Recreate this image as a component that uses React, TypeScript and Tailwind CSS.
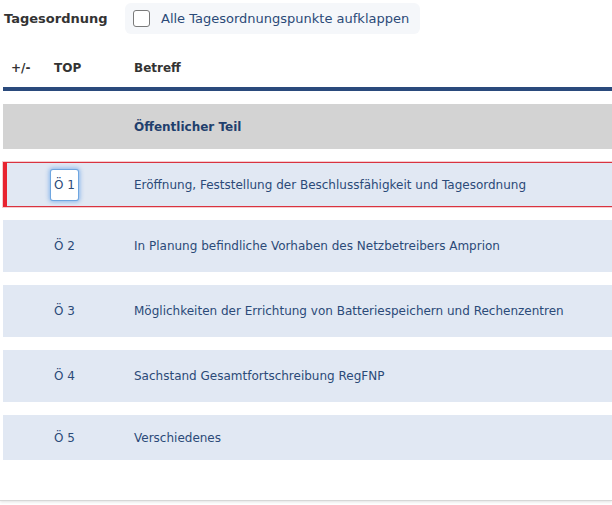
import React from "react";

const rows = [
  { top: "Ö 1", text: "Eröffnung, Feststellung der Beschlussfähigkeit und Tagesordnung", h: "h-[45px]", active: true },
  { top: "Ö 2", text: "In Planung befindliche Vorhaben des Netzbetreibers Amprion", h: "h-[52px]" },
  { top: "Ö 3", text: "Möglichkeiten der Errichtung von Batteriespeichern und Rechenzentren", h: "h-[52px]" },
  { top: "Ö 4", text: "Sachstand Gesamtfortschreibung RegFNP", h: "h-[52px]" },
  { top: "Ö 5", text: "Verschiedenes", h: "h-[45px]" },
];

export default function App() {
  return (
    <div className="w-[612px] h-[505px] overflow-hidden bg-white font-['DejaVu_Sans',sans-serif]">
      <div className="h-[501px] border-b border-[#d6d6d6] shadow-[0_1px_3px_rgba(0,0,0,0.12)]">
        <div className="flex items-center h-[36px] pl-[4px] pt-[1px]">
          <span className="text-[13px] font-bold text-[#333] w-[121px]">Tagesordnung</span>
          <label className="flex items-center h-[31px] w-[295px] rounded-[6px] bg-[#f5f7fa] pl-[8px]">
            <span className="w-[17px] h-[17px] rounded-[3px] border border-[#7a7a7a] bg-white" />
            <span className="ml-[11px] text-[13px] text-[#2b4a78]">Alle Tagesordnungspunkte aufklappen</span>
          </label>
        </div>
        <div className="ml-[3px] mt-[13px] flex items-center h-[38px] text-[12px] font-bold text-[#333]">
          <span className="w-[51px] pl-[8px]">+/-</span>
          <span className="w-[80px]">TOP</span>
          <span>Betreff</span>
        </div>
        <div className="ml-[3px] h-[4px] bg-[#2a4a7c]" />
        <div className="ml-[3px] mt-[13px] flex flex-col gap-[13px]">
          <div className="h-[45px] bg-[#d3d3d3] flex items-center text-[12px] font-bold text-[#1f3f6d]">
            <span className="w-[131px]" />
            <span>Öffentlicher Teil</span>
          </div>
          {rows.map((r) => (
            <div
              key={r.top}
              className={`${r.h} bg-[#e1e8f3] flex items-center text-[12px] text-[#2b4a78] ${
                r.active ? "border-y border-[#d9333f] shadow-[0_0_0_1px_rgba(217,51,63,0.25)] relative" : ""
              }`}
            >
              {r.active && <span className="absolute left-0 top-[-1px] bottom-[-1px] w-[4px] bg-[#e8232f]" />}
              <span className="w-[51px]" />
              <span className="w-[80px] relative">
                {r.active ? (
                  <span className="inline-block -ml-[3px] px-[3px] py-[6px] bg-white rounded-[2px] shadow-[0_0_0_1px_#6fa6e0,0_0_4px_2px_rgba(80,150,230,0.6)]">
                    {r.top}
                  </span>
                ) : (
                  r.top
                )}
              </span>
              <span className="whitespace-nowrap">{r.text}</span>
            </div>
          ))}
        </div>
      </div>
    </div>
  );
}
